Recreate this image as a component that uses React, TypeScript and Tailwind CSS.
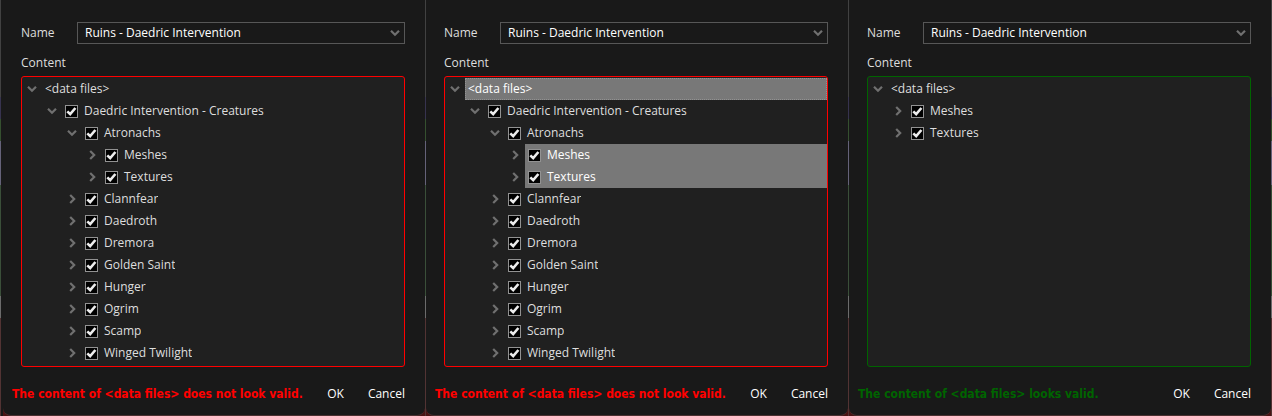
import React from "react";

type Node = { label: string; depth: number; open: boolean; check?: boolean; selected?: boolean };

const creatures: Node[] = [
  { label: "<data files>", depth: 0, open: true, check: false },
  { label: "Daedric Intervention - Creatures", depth: 1, open: true },
  { label: "Atronachs", depth: 2, open: true },
  { label: "Meshes", depth: 3, open: false },
  { label: "Textures", depth: 3, open: false },
  { label: "Clannfear", depth: 2, open: false },
  { label: "Daedroth", depth: 2, open: false },
  { label: "Dremora", depth: 2, open: false },
  { label: "Golden Saint", depth: 2, open: false },
  { label: "Hunger", depth: 2, open: false },
  { label: "Ogrim", depth: 2, open: false },
  { label: "Scamp", depth: 2, open: false },
  { label: "Winged Twilight", depth: 2, open: false },
];

const selectedRows = [0, 3, 4];

const flat: Node[] = [
  { label: "<data files>", depth: 0, open: true, check: false },
  { label: "Meshes", depth: 1, open: false },
  { label: "Textures", depth: 1, open: false },
];

const indents = ["pl-0", "pl-5", "pl-10", "pl-15"];

function Chevron({ open }: { open: boolean }) {
  return (
    <svg viewBox="0 0 10 10" className="size-2.5" fill="none" stroke="#707070" strokeWidth="2.2" aria-hidden="true">
      <path d={open ? "M1 2.8 5 6.8 9 2.8" : "M3.2 1 7.2 5 3.2 9"} />
    </svg>
  );
}

function Row({ node, id }: { node: Node; id: string }) {
  const root = node.depth === 0;
  return (
    <li role="treeitem" aria-expanded={node.open} aria-selected={!!node.selected} className={`flex h-[22px] ${indents[node.depth]}`}>
      <button type="button" aria-label={`Toggle ${node.label}`} className="flex w-5 shrink-0 items-center justify-center">
        <Chevron open={node.open} />
      </button>
      <div
        className={`flex min-w-0 flex-1 items-center ${
          node.selected ? "bg-[#787878] text-white" : ""
        } ${node.selected && root ? "outline outline-dotted -outline-offset-1 outline-[#929292]" : ""}`}
      >
        {node.check === false ? (
          <span className="pl-[3px]">{node.label}</span>
        ) : (
          <>
            <span className="ml-[3px] grid size-[13px] shrink-0">
              <input
                id={id}
                type="checkbox"
                defaultChecked
                className="peer col-start-1 row-start-1 size-[13px] appearance-none border border-[#929292] bg-black"
              />
              <svg viewBox="0 0 13 13" className="pointer-events-none invisible col-start-1 row-start-1 size-[13px] peer-checked:visible" fill="none" stroke="#ececec" strokeWidth="2.6" aria-hidden="true">
                <path d="M2.3 6.3 5.2 9.2 10.4 3" />
              </svg>
            </span>
            <label htmlFor={id} className="truncate pl-1.5">{node.label}</label>
          </>
        )}
      </div>
    </li>
  );
}

function Edge() {
  return (
    <div className="flex w-px shrink-0 flex-col">
      <div className="h-[97px] bg-[#414141]" />
      <div className="h-[22px] bg-[#37334f]" />
      <div className="h-[22px] bg-[#35502f]" />
      <div className="h-11 bg-[#656279]" />
      <div className="h-[111px] bg-[#3a4f39]" />
      <div className="h-[22px] bg-[#6b6b6b]" />
      <div className="flex-1 bg-[#523333]" />
    </div>
  );
}

function Dialog({ id, nodes, valid }: { id: string; nodes: Node[]; valid: boolean }) {
  return (
    <section className="flex min-w-0 flex-1">
      <form className="min-w-0 flex-1 rounded-b-lg border-b border-[#4b3030] bg-[#191919] pt-[22px] pb-2.5" onSubmit={(e) => e.preventDefault()}>
        <div className="flex items-center pr-5 pl-[18px]">
          <label htmlFor={`${id}-name`} className="w-14 shrink-0 text-[#dedede]">Name</label>
          <div className="grid min-w-0 flex-1 items-center">
            <select id={`${id}-name`} className="col-start-1 row-start-1 h-[22px] w-full appearance-none border border-[#575757] bg-[#191919] px-[7px] text-white">
              <option>Ruins - Daedric Intervention</option>
            </select>
            <span className="pointer-events-none col-start-1 row-start-1 justify-self-end pr-[5px]">
              <Chevron open />
            </span>
          </div>
        </div>
        <h2 id={`${id}-content`} className="pt-2 pb-0.5 pl-[18px] leading-[22px] text-[#dedede]">Content</h2>
        <div className="pr-5 pl-[18px]">
          <ul
            role="tree"
            aria-labelledby={`${id}-content`}
            className={`min-h-[291px] rounded-[3px] border bg-[#202020] pt-px text-[#dedede] ${valid ? "border-[#006400]" : "border-[#ff0000]"}`}
          >
            {nodes.map((n, i) => (
              <Row key={i} node={n} id={`${id}-${i}`} />
            ))}
          </ul>
        </div>
        <div className="flex items-center pt-4 pr-5 pl-[9px]">
          <p className={`flex-1 font-['DejaVu_Sans_Condensed','DejaVu_Sans',sans-serif] text-[12px] font-bold whitespace-nowrap ${valid ? "text-[#006400]" : "text-[#ff0000]"}`}>
            The content of &lt;data files&gt; {valid ? "looks" : "does not look"} valid.
          </p>
          <div className="flex gap-6 leading-[22px] text-white">
            <button type="submit">OK</button>
            <button type="button">Cancel</button>
          </div>
        </div>
      </form>
      <Edge />
    </section>
  );
}

export default function App() {
  return (
    <main className="flex bg-[#4a1414] font-['Open_Sans','Noto_Sans',sans-serif] text-[12px]">
      <Edge />
      <div className="w-0.5 bg-[#191919]" />
      <Dialog id="first" nodes={creatures} valid={false} />
      <Dialog id="second" nodes={creatures.map((n, i) => ({ ...n, selected: selectedRows.includes(i) }))} valid={false} />
      <Dialog id="third" nodes={flat} valid />
    </main>
  );
}
